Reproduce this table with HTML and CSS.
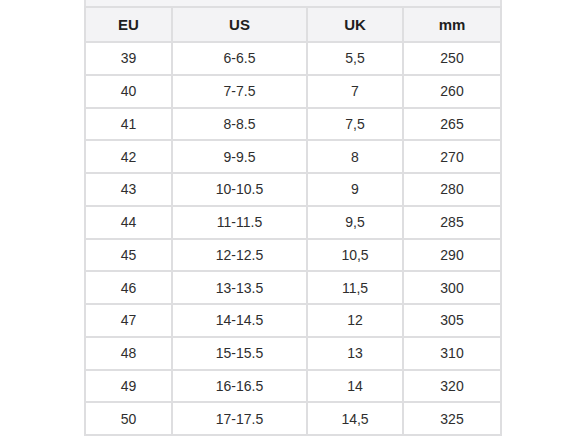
FILE: index.html
```html
<!DOCTYPE html>
<html>
<head>
<meta charset="utf-8">
<link rel="stylesheet" href="styles.css">
</head>
<body>
<div class="wrap">
  <div class="cap"></div>
  <table class="sizes">
    <thead>
      <tr><th class="c1">EU</th><th class="c2">US</th><th class="c3">UK</th><th class="c4">mm</th></tr>
    </thead>
    <tbody>
      <tr><td>39</td><td>6-6.5</td><td>5,5</td><td>250</td></tr>
      <tr><td>40</td><td>7-7.5</td><td>7</td><td>260</td></tr>
      <tr><td>41</td><td>8-8.5</td><td>7,5</td><td>265</td></tr>
      <tr><td>42</td><td>9-9.5</td><td>8</td><td>270</td></tr>
      <tr><td>43</td><td>10-10.5</td><td>9</td><td>280</td></tr>
      <tr><td>44</td><td>11-11.5</td><td>9,5</td><td>285</td></tr>
      <tr><td>45</td><td>12-12.5</td><td>10,5</td><td>290</td></tr>
      <tr><td>46</td><td>13-13.5</td><td>11,5</td><td>300</td></tr>
      <tr><td>47</td><td>14-14.5</td><td>12</td><td>305</td></tr>
      <tr><td>48</td><td>15-15.5</td><td>13</td><td>310</td></tr>
      <tr><td>49</td><td>16-16.5</td><td>14</td><td>320</td></tr>
      <tr><td>50</td><td>17-17.5</td><td>14,5</td><td>325</td></tr>
    </tbody>
  </table>
</div>
</body>
</html>
```
FILE: styles.css
```css
html, body {
  margin: 0;
  padding: 0;
  background: #ffffff;
}
.wrap {
  margin-left: 84px;
  width: 418px;
  font-family: "Liberation Sans", Arial, sans-serif;
}
.cap {
  height: 6px;
  background: #f4f4f6;
  border-left: 2px solid #e0e0e2;
  border-right: 2px solid #e0e0e2;
  box-sizing: border-box;
}
.sizes {
  width: 418px;
  border-collapse: collapse;
  table-layout: fixed;
}
.sizes th, .sizes td {
  border: 2px solid #dedee0;
  text-align: center;
  padding: 0;
}
.sizes th {
  height: 33px;
  background: #f3f3f5;
  color: #1e1e1e;
  font-weight: bold;
  font-size: 15px;
}
.sizes td {
  height: 30.75px;
  color: #2e2e2e;
  font-size: 14px;
}
.c1 { width: 85px; }
.c2 { width: 133px; }
.c3 { width: 94px; }
.c4 { width: auto; }
```
